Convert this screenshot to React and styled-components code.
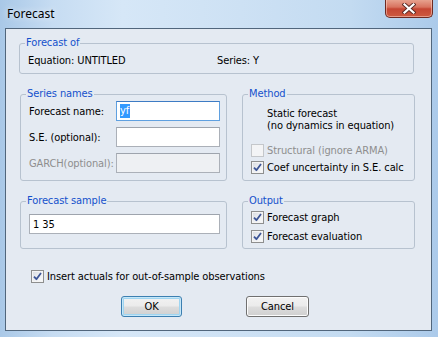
import React from "react";
import styled, { createGlobalStyle } from "styled-components";

const GlobalStyle = createGlobalStyle`
  html, body {
    margin: 0;
    padding: 0;
    background: #ffffff;
  }
  * {
    box-sizing: border-box;
  }
`;

const UI_FONT = `"DejaVu Sans Condensed", "Liberation Sans", sans-serif`;

const Window = styled.div`
  width: 438px;
  height: 337px;
  display: flex;
  flex-direction: column;
  background: linear-gradient(90deg, #a9c8e7 0%, #c6dcf2 12%, #d6e7f7 28%, #cde1f4 55%, #c3dbf1 80%, #abcaea 100%);
  font-family: ${UI_FONT};
  font-size: 11px;
  letter-spacing: -0.1px;
  color: #000;
`;

const TitleBar = styled.div`
  height: 28px;
  display: flex;
  align-items: center;
  justify-content: space-between;
  padding-left: 7px;
`;

const Title = styled.span`
  font-family: "Noto Sans", "Open Sans", sans-serif;
  font-size: 12px;
  letter-spacing: 0;
  color: #000;
  margin-top: -2px;
  text-shadow: 0 0 6px rgba(255, 255, 255, 0.9);
`;

const CloseButton = styled.div`
  align-self: flex-start;
  width: 48px;
  height: 19px;
  margin-right: 5px;
  margin-top: -1px;
  border: 1px solid #6e2a22;
  border-top: none;
  border-radius: 0 0 5px 5px;
  background: linear-gradient(180deg, #e9a895 0%, #d8735f 45%, #c54633 55%, #cd5a3f 100%);
  box-shadow: inset 0 0 0 1px rgba(255, 220, 210, 0.5);
  display: flex;
  align-items: center;
  justify-content: center;
`;

const Client = styled.div`
  flex: 1;
  margin: 0 6px 6px 5px;
  border: 1px solid #51667c;
  background: #e4eaf2;
  display: flex;
  flex-direction: column;
  padding: 14px 16px 0 13px;
`;

const Group = styled.div`
  position: relative;
  border: 1px solid #b7c2cf;
  border-radius: 3px;
  width: ${(p) => p.$w}px;
  height: ${(p) => p.$h}px;
  padding: ${(p) => p.$pad};
`;

const Legend = styled.span`
  position: absolute;
  top: -8px;
  left: 5px;
  padding: 0 1px;
  background: #e4eaf2;
  color: #1451cc;
  line-height: 14px;
`;

const SourceRow = styled.div`
  display: grid;
  grid-template-columns: 189px auto;
  line-height: 13px;
`;

const Columns = styled.div`
  display: flex;
  gap: 15px;
  margin-left: 1px;
  margin-top: ${(p) => p.$top}px;
`;

const FieldGrid = styled.div`
  display: grid;
  grid-template-columns: 87px 104px;
  row-gap: 6px;
  align-items: center;
`;

const Label = styled.span`
  color: ${(p) => (p.$disabled ? "#8e8e8e" : "#000")};
  white-space: nowrap;
`;

const TextBox = styled.div`
  height: 20px;
  width: ${(p) => (p.$w ? `${p.$w}px` : "100%")};
  border: 1px solid ${(p) => (p.$focus ? "#5fa0e0" : "#abb0b8")};
  border-top-color: ${(p) => (p.$focus ? "#3d7bc4" : "#9ea4ad")};
  background: ${(p) => (p.$disabled ? "#eef0f3" : "#fff")};
  display: flex;
  align-items: center;
  padding-left: 3px;
  line-height: 13px;
`;

const Selected = styled.span`
  background: #3399ff;
  color: #fff;
  padding: 0 1px 1px 0;
`;

const Note = styled.div`
  margin-left: 16px;
  line-height: 12px;
`;

const CheckList = styled.div`
  display: flex;
  flex-direction: column;
  gap: ${(p) => p.$gap}px;
  margin-top: ${(p) => p.$top || 0}px;
`;

const CheckRow = styled.div`
  display: flex;
  align-items: center;
  gap: 3px;
  line-height: 13px;
  color: ${(p) => (p.$disabled ? "#8e8e8e" : "#000")};
`;

const Box = styled.span`
  width: 13px;
  height: 13px;
  border: 1px solid ${(p) => (p.$disabled ? "#c4c7cb" : "#8e8f8f")};
  background: ${(p) =>
    p.$disabled
      ? "#f3f4f6"
      : "linear-gradient(135deg, #d8dbe0 0%, #eceef1 50%, #fbfbfb 100%)"};
  box-shadow: inset 0 0 0 1px #f4f4f4;
  display: flex;
  align-items: center;
  justify-content: center;
  flex: none;
`;

const Check = ({ checked, disabled, children }) => (
  <CheckRow $disabled={disabled}>
    <Box $disabled={disabled}>
      {checked && (
        <svg width="9" height="9" viewBox="0 0 9 9">
          <path
            d="M1 4.6 L3.4 7.2 L8 1"
            fill="none"
            stroke="#3d5596"
            strokeWidth="1.8"
            strokeLinejoin="round"
          />
        </svg>
      )}
    </Box>
    <span>{children}</span>
  </CheckRow>
);

const Insert = styled.div`
  margin: 21px 0 0 12px;
`;

const ButtonRow = styled.div`
  display: flex;
  margin: 13px 0 0 102px;
  gap: 64px;
`;

const Button = styled.div`
  width: ${(p) => p.$w}px;
  height: 21px;
  border-radius: 3px;
  border: 1px solid ${(p) => (p.$default ? "#3c7fb1" : "#707070")};
  background: linear-gradient(180deg, #f2f2f2 0%, #ebebeb 48%, #dddddd 52%, #cfcfcf 100%);
  box-shadow: ${(p) =>
    p.$default ? "inset 0 0 0 1px #c6e7f8, inset 0 0 0 2px #9fd5f1" : "inset 0 0 0 1px #fcfcfc"};
  display: flex;
  align-items: center;
  justify-content: center;
  line-height: 13px;
`;

export default function App() {
  return (
    <>
      <GlobalStyle />
      <Window>
        <TitleBar>
          <Title>Forecast</Title>
          <CloseButton>
            <svg width="14" height="11" viewBox="0 0 14 11">
              <path
                d="M2.5 1.5 L11.5 9.5 M11.5 1.5 L2.5 9.5"
                stroke="#5a2a24"
                strokeWidth="4"
                strokeLinecap="square"
              />
              <path
                d="M2.5 1.5 L11.5 9.5 M11.5 1.5 L2.5 9.5"
                stroke="#ffffff"
                strokeWidth="2.2"
                strokeLinecap="square"
              />
            </svg>
          </CloseButton>
        </TitleBar>

        <Client>
          <Group $w={395} $h={31} $pad="10px 0 0 8px">
            <Legend>Forecast of</Legend>
            <SourceRow>
              <span>Equation: UNTITLED</span>
              <span>Series: Y</span>
            </SourceRow>
          </Group>

          <Columns $top={20}>
            <Group $w={207} $h={87} $pad="6px 0 0 8px">
              <Legend>Series names</Legend>
              <FieldGrid>
                <Label>Forecast name:</Label>
                <TextBox $focus>
                  <Selected>yf</Selected>
                </TextBox>
                <Label>S.E. (optional):</Label>
                <TextBox />
                <Label $disabled>GARCH(optional):</Label>
                <TextBox $disabled />
              </FieldGrid>
            </Group>

            <Group $w={173} $h={87} $pad="13px 0 0 8px">
              <Legend>Method</Legend>
              <Note>
                Static forecast
                <br />
                (no dynamics in equation)
              </Note>
              <CheckList $gap={4} $top={12}>
                <Check disabled>Structural (ignore ARMA)</Check>
                <Check checked>Coef uncertainty in S.E. calc</Check>
              </CheckList>
            </Group>
          </Columns>

          <Columns $top={20}>
            <Group $w={207} $h={48} $pad="12px 0 0 8px">
              <Legend>Forecast sample</Legend>
              <TextBox $w={191}>1 35</TextBox>
            </Group>
            <Group $w={173} $h={48} $pad="9px 0 0 8px">
              <Legend>Output</Legend>
              <CheckList $gap={6}>
                <Check checked>Forecast graph</Check>
                <Check checked>Forecast evaluation</Check>
              </CheckList>
            </Group>
          </Columns>

          <Insert>
            <Check checked>Insert actuals for out-of-sample observations</Check>
          </Insert>

          <ButtonRow>
            <Button $w={61} $default>
              OK
            </Button>
            <Button $w={63}>Cancel</Button>
          </ButtonRow>
        </Client>
      </Window>
    </>
  );
}
